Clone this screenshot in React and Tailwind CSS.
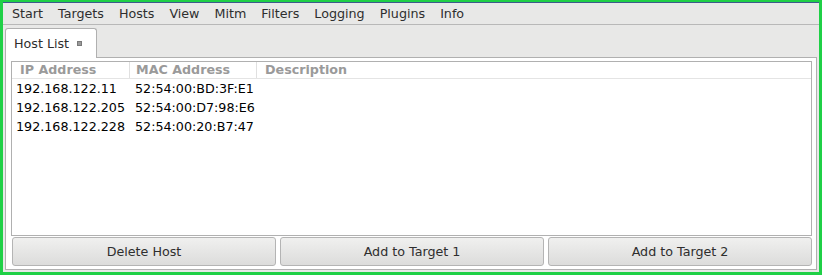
import React from 'react';

const menus = ['Start', 'Targets', 'Hosts', 'View', 'Mitm', 'Filters', 'Logging', 'Plugins', 'Info'];

const hosts = [
    { ip: '192.168.122.11', mac: '52:54:00:BD:3F:E1' },
    { ip: '192.168.122.205', mac: '52:54:00:D7:98:E6' },
    { ip: '192.168.122.228', mac: '52:54:00:20:B7:47' },
];

const Button = ({ children }) => (
    <button className="flex-1 h-[29px] rounded-[3px] border border-[#b4b4b4] bg-gradient-to-b from-[#f0f0ef] to-[#dcdcdb] text-[12.7px] text-[#2e2e2e]">
        {children}
    </button>
);

export default function App() {
    return (
        <div className="w-[822px] h-[275px] border-[3px] border-[#1fd046] border-t-2 bg-[#e8e8e7] flex flex-col overflow-hidden" style={{ fontFamily: '"DejaVu Sans", sans-serif' }}>
            <div className="h-[1px] bg-[#3c5a8c]" />
            <div className="h-[22px] flex items-center pl-[9px] gap-[15px] text-[12.7px] text-[#2e2e2e] border-b border-[#b8b8b8]">
                {menus.map(m => (
                    <span key={m}>{m}</span>
                ))}
            </div>
            <div className="flex items-end h-[32px] pl-[2px]">
                <div className="h-[30px] w-[92px] bg-[#ffffff] border border-b-0 border-[#b0b0b0] rounded-t-[3px] flex items-center pl-[8px] gap-[8px] text-[12.7px] text-[#2e2e2e] relative top-[1px]">
                    <span>Host List</span>
                    <span className="w-[5px] h-[5px] bg-[#9a9a9a] border border-[#7a7a7a]" />
                </div>
            </div>
            <div className="flex-1 mx-[2px] mb-[2px] bg-white border border-[#b0b0b0] flex flex-col pl-[5px] pr-[4px] pt-[3px] pb-[3px]">
                <div className="flex-1 border border-[#b0b0b0] bg-white flex flex-col">
                    <div className="flex h-[17px] items-center text-[12.7px] font-bold text-[#9a9a9a] border-b border-[#e4e4e4]">
                        <div className="w-[118px] pl-[8px] border-r border-[#e0e0e0] h-full flex items-center">IP Address</div>
                        <div className="w-[127px] pl-[6px] border-r border-[#e0e0e0] h-full flex items-center">MAC Address</div>
                        <div className="pl-[8px] h-full flex items-center">Description</div>
                    </div>
                    <div>
                        {hosts.map(h => (
                            <div key={h.ip} className="flex h-[19px] items-center text-[12.7px] text-black">
                                <div className="w-[118px] pl-[4px]">{h.ip}</div>
                                <div className="pl-[5px]">{h.mac}</div>
                            </div>
                        ))}
                    </div>
                </div>
                <div className="flex gap-[4px] mt-[1px] pl-[1px]">
                    <Button>Delete Host</Button>
                    <Button>Add to Target 1</Button>
                    <Button>Add to Target 2</Button>
                </div>
            </div>
        </div>
    );
}
